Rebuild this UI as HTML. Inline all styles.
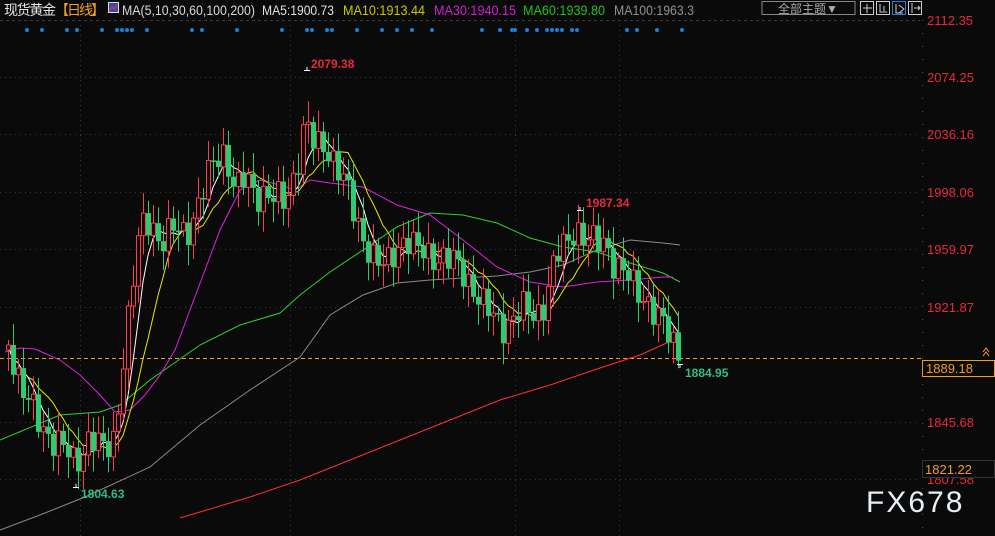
<!DOCTYPE html>
<html><head><meta charset="utf-8"><style>
html,body{margin:0;padding:0;background:#0a0a0a;width:995px;height:536px;overflow:hidden}
svg{display:block;font-family:"Liberation Sans","Noto Sans CJK SC",sans-serif}
</style></head><body>
<svg id="s" width="995" height="536" viewBox="0 0 995 536" xmlns="http://www.w3.org/2000/svg">
<rect width="995" height="536" fill="#0a0a0a"/>
<g stroke="#3a3a3a" stroke-dasharray="1,4" stroke-width="1">
<line x1="0" y1="20.5" x2="920" y2="20.5" stroke-dasharray="3,3"/>
<line x1="0" y1="77.5" x2="920" y2="77.5"/>
<line x1="0" y1="134.5" x2="920" y2="134.5"/>
<line x1="0" y1="192.5" x2="920" y2="192.5"/>
<line x1="0" y1="249.5" x2="920" y2="249.5"/>
<line x1="0" y1="307.5" x2="920" y2="307.5"/>
<line x1="0" y1="422.5" x2="920" y2="422.5"/>
<line x1="0" y1="479.5" x2="920" y2="479.5"/>
<line x1="80.5" y1="20" x2="80.5" y2="536"/>
<line x1="290.5" y1="20" x2="290.5" y2="536"/>
<line x1="515.5" y1="20" x2="515.5" y2="536"/>
<line x1="619.5" y1="20" x2="619.5" y2="536"/>
<line x1="922.5" y1="20" x2="922.5" y2="536" stroke="#555" stroke-dasharray="1,12"/>
</g>
<line x1="0" y1="358.5" x2="922" y2="358.5" stroke="#f39c20" stroke-dasharray="4,3"/>
<g id="blue" fill="#1e7fd6"></g>
<g id="ma"></g>
<g id="cdl"></g>
<text x="4" y="15" fill="#e6e6e6" font-size="14" textLength="52">现货黄金</text>
<text x="55" y="15" fill="#f0a020" font-size="14" textLength="50">【日线】</text>
<rect x="108" y="2" width="11" height="11" fill="#ddd"/><rect x="109" y="3" width="9" height="9" fill="#2a4fb0"/>
<polyline points="109,11 112,7 114,9 118,4" fill="none" stroke="#e33" stroke-width="1.2"/>
<text x="122" y="15" fill="#d8d8d8" font-size="14" textLength="133" lengthAdjust="spacingAndGlyphs">MA(5,10,30,60,100,200)</text>
<text x="262" y="15" fill="#e0e0e0" font-size="14" textLength="72" lengthAdjust="spacingAndGlyphs">MA5:1900.73</text>
<text x="343" y="15" fill="#c8c800" font-size="14" textLength="82" lengthAdjust="spacingAndGlyphs">MA10:1913.44</text>
<text x="434" y="15" fill="#d020d0" font-size="14" textLength="82" lengthAdjust="spacingAndGlyphs">MA30:1940.15</text>
<text x="523" y="15" fill="#20c020" font-size="14" textLength="82" lengthAdjust="spacingAndGlyphs">MA60:1939.80</text>
<text x="614" y="15" fill="#909090" font-size="14" textLength="80" lengthAdjust="spacingAndGlyphs">MA100:1963.3</text>
<rect x="762" y="1.5" width="93" height="13" fill="none" stroke="#888"/>
<text x="778" y="13" fill="#aaa" font-size="12">全部主题▼</text>
<g fill="none" stroke="#ccc">
<rect x="860.5" y="1.5" width="13" height="13"/><rect x="876.5" y="1.5" width="13" height="13"/>
<rect x="892.5" y="1.5" width="13" height="13" stroke="#1e7fd6"/><rect x="908.5" y="1.5" width="13" height="13"/>
<path d="M867 4v9M863 8h9M880 4v8h7M884 6v5M896 4v9h7M899 5l5 4-5 4M912 3v10M914 8h6M918 6l2 2-2 2"/>
</g>
<g fill="#e8283c" font-size="13">
<text x="927" y="25">2112.35</text><text x="927" y="82">2074.25</text><text x="927" y="139">2036.16</text>
<text x="927" y="197">1998.06</text><text x="927" y="254">1959.97</text><text x="927" y="312">1921.87</text>
<text x="927" y="427">1845.68</text><text x="927" y="484">1807.58</text>
</g>
<rect x="922.5" y="360.5" width="72" height="16" fill="#0a0a0a" stroke="#f39c20"/>
<text x="926" y="373" fill="#f39c20" font-size="13">1889.18</text>
<rect x="922.5" y="460.5" width="72" height="17" fill="#0a0a0a" stroke="#333"/>
<text x="925" y="474" fill="#f39c20" font-size="13">1821.22</text>
<path d="M983 356l3-4 3 4M983 352l3-4 3 4" stroke="#f39c20" fill="none"/>
<text x="866" y="512" fill="#e8eef5" font-size="30" letter-spacing="2">FX678</text>
<g font-size="12" font-weight="bold">
<text x="311" y="68" fill="#e8283c">2079.38</text>
<text x="586" y="207" fill="#e8283c">1987.34</text>
<text x="81" y="498" fill="#2ebd85">1804.63</text>
<text x="685" y="377" fill="#2ebd85">1884.95</text>
</g>
<g stroke="#fff"><path d="M304 70.5h6M307 70v-3M577 210.5h6M580 210v-3M73 487.5h6M76 487v-3M677 364.5h6M680 365v3"/></g>
</svg>
<script>
(function(){
var NS="http://www.w3.org/2000/svg";
function el(g,t,a){var e=document.createElementNS(NS,t);for(var k in a)e.setAttribute(k,a[k]);document.getElementById(g).appendChild(e);return e;}
[27,42,67,77,102,117,122,127,132,147,192,202,237,282,307,312,327,332,357,382,397,412,432,482,500,512,515,527,537,547,552,557,562,572,577,627,637,657,682].forEach(function(x){el('blue','circle',{cx:x,cy:30,r:2});});
var kp=[[8,345],[20,380],[40,430],[60,440],[75,470],[90,430],[105,455],[115,440],[120,380],[130,300],[140,230],[150,220],[160,240],[175,230],[185,235],[195,210],[205,185],[215,160],[225,150],[235,190],[245,180],[255,195],[265,190],[275,200],[285,205],[295,170],[305,120],[315,150],[325,145],[335,160],[345,185],[355,220],[365,240],[375,260],[385,270],[395,250],[405,235],[415,250],[425,255],[440,255],[455,265],[465,275],[475,290],[485,310],[495,320],[505,325],[515,315],[525,310],[535,315],[545,300],[555,260],[565,245],[575,225],[585,240],[595,245],[605,240],[615,265],[625,275],[635,290],[645,295],[655,315],[665,330],[675,345],[681,355]];
function interp(x){for(var j=0;j<kp.length-1;j++){if(x<=kp[j+1][0]){var a=kp[j],b=kp[j+1],t=(x-a[0])/(b[0]-a[0]);return a[1]+(b[1]-a[1])*t;}}return kp[kp.length-1][1];}
var cl=[],xs=[];
for(var px=8,i=0;px<=681;px+=5,i++){xs.push(px);cl.push(interp(px)+Math.sin(i*2.3)*13+Math.sin(i*0.9)*7);}
var prev=cl[0]+5;
for(var i=0;i<cl.length;i++){var o=prev,c=cl[i],cx=xs[i];var tp=Math.min(o,c),bt=Math.max(o,c);
var hi=tp-5-Math.abs(Math.sin(i*1.7))*16,lo=bt+5+Math.abs(Math.cos(i*1.3))*16;
var up=c<o;var col=up?'#ff3b4f':'#2ecc71';
el('cdl','line',{x1:cx+.5,y1:hi,x2:cx+.5,y2:lo,stroke:col});
if(up){el('cdl','rect',{x:cx-1.5,y:tp,width:4,height:Math.max(bt-tp,1),fill:'#0a0a0a',stroke:col});}
else{el('cdl','rect',{x:cx-2,y:tp,width:5,height:Math.max(bt-tp,1.5),fill:col});}
prev=c;}
function ma(n,col){var p=[];for(var i=0;i<cl.length;i++){var a=0,k=0;for(var j=Math.max(0,i-n+1);j<=i;j++){a+=cl[j];k++;}p.push(xs[i]+','+(a/k).toFixed(1));}el('ma','polyline',{points:p.join(' '),fill:'none',stroke:col,'stroke-width':1});}
function pl(pts,col){el('ma','polyline',{points:pts,fill:'none',stroke:col,'stroke-width':1});}
pl("180,518 250,497 300,480 350,460 400,440 450,420 500,400 550,385 600,368 640,355 680,337","#ff3030");
pl("0,530 40,515 85,497 150,467 200,425 250,390 300,357 330,315 363,295 397,283 430,280 463,278 497,276 530,272 563,265 597,250 630,240 663,243 680,245","#8a8a8a");
pl("0,440 60,415 100,412 120,405 150,380 200,345 240,325 280,313 300,295 330,272 363,250 397,227 430,213 463,215 497,223 530,238 563,247 597,252 630,263 663,273 680,282","#30d030");
pl("5,352 20,348 35,349 60,360 80,375 100,395 115,412 130,410 145,395 160,375 175,350 190,310 205,270 220,230 240,190 260,180 280,185 295,190 310,180 330,183 363,187 397,205 430,215 463,240 497,267 530,282 563,287 597,282 630,280 663,277 673,277","#e020e0");
ma(10,'#e8e800');ma(5,'#ffffff');
})();
</script>
</body></html>
